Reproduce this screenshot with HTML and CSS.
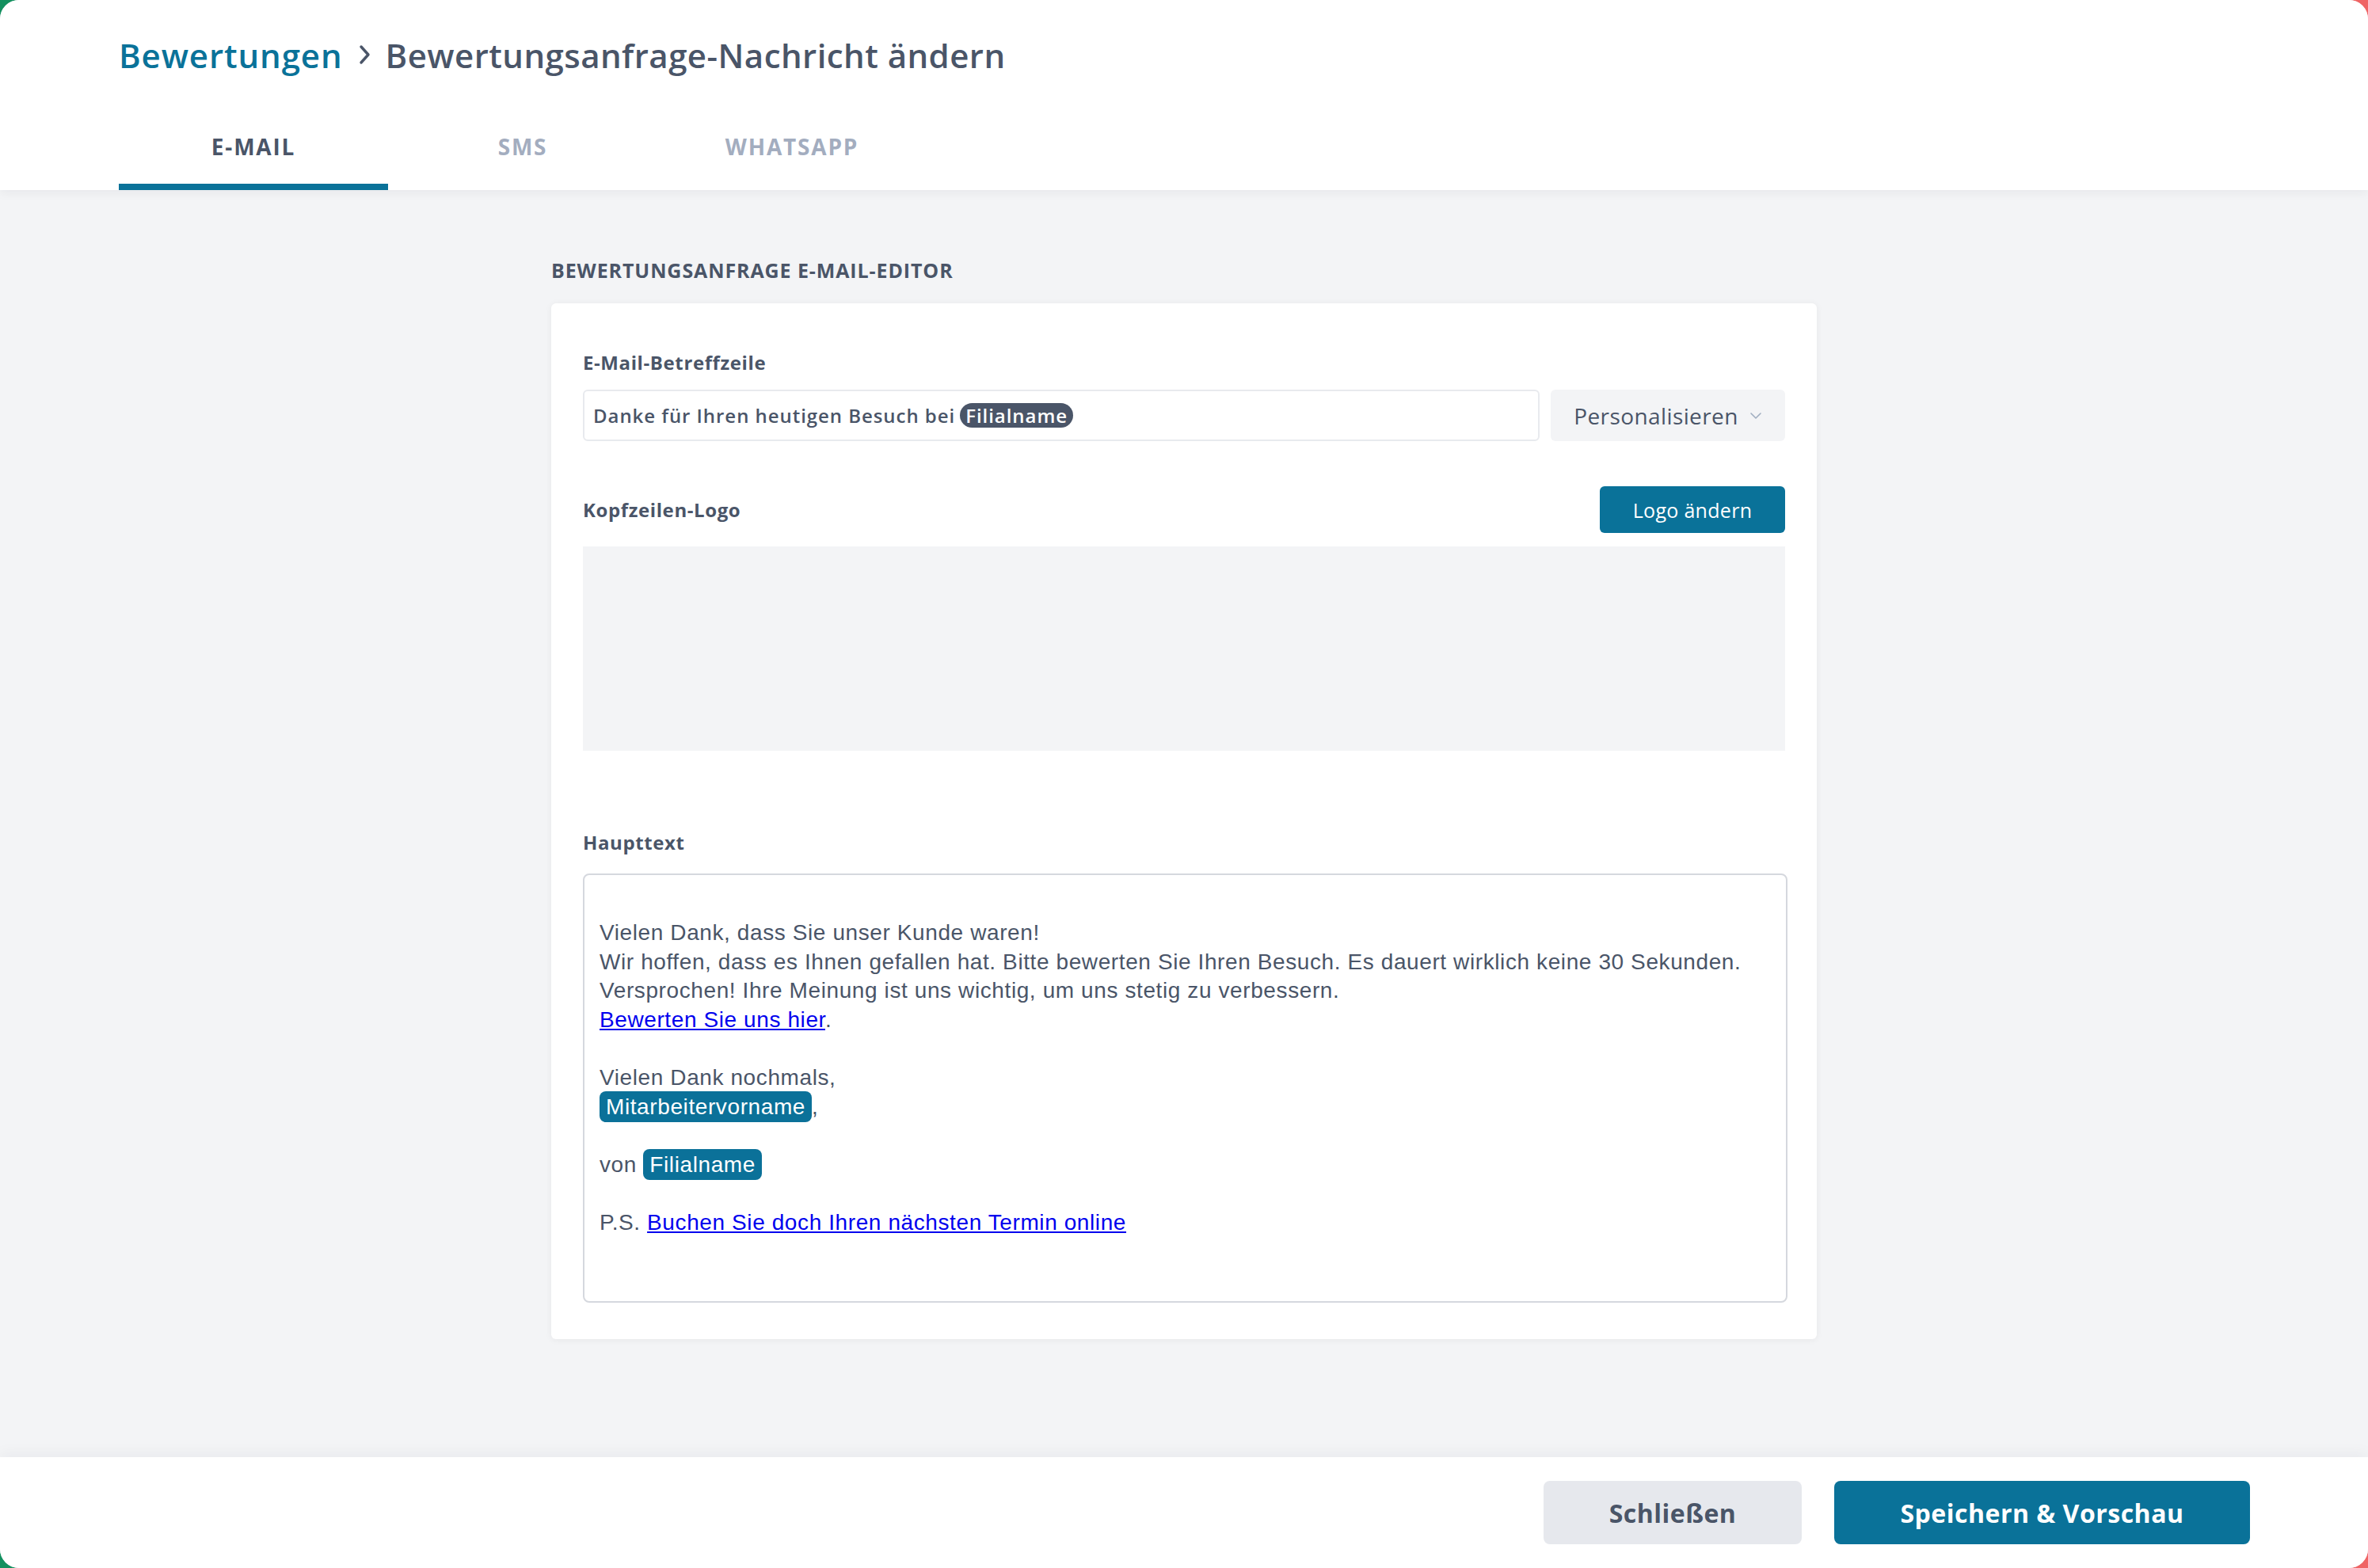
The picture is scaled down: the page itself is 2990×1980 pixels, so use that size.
FILE: index.html
```html
<!DOCTYPE html>
<html lang="de">
<head>
    <meta charset="UTF-8">
    <meta name="viewport" content="width=device-width, initial-scale=1.0">
    <title>Bewertungsanfrage-Nachricht ändern</title>
    <link rel="stylesheet" href="styles.css">
</head>
<body>
    <div class="window">
        <header class="page-header">
            <nav class="crumbs">
                <a href="#" class="crumb-link">Bewertungen</a>
                <svg class="crumb-sep" width="16" height="26" viewBox="0 0 16 26">
                    <path d="M3 3 L12 13 L3 23" fill="none" stroke="#4a5568" stroke-width="3.4" stroke-linecap="round" stroke-linejoin="round"/>
                </svg>
                <span>Bewertungsanfrage-Nachricht ändern</span>
            </nav>
            <div class="tabs">
                <button class="tab active">E-MAIL</button>
                <button class="tab">SMS</button>
                <button class="tab">WHATSAPP</button>
            </div>
        </header>

        <main class="content">
            <section class="editor">
                <h2 class="section-title">BEWERTUNGSANFRAGE E-MAIL-EDITOR</h2>
                <div class="card">
                    <!-- Betreffzeile -->
                    <p class="field-label subject-label">E-Mail-Betreffzeile</p>
                    <div class="subject-row">
                        <div class="subject-input"><span>Danke für Ihren heutigen Besuch bei</span><span class="tag">Filialname</span></div>
                        <button class="personalize">
                            Personalisieren
                            <svg width="16" height="10" viewBox="0 0 16 10">
                                <path d="M2 2 L8 8 L14 2" fill="none" stroke="#a0aec0" stroke-width="1.6" stroke-linecap="round" stroke-linejoin="round"/>
                            </svg>
                        </button>
                    </div>

                    <!-- Logo -->
                    <div class="logo-head">
                        <p class="field-label">Kopfzeilen-Logo</p>
                        <button class="btn-logo">Logo ändern</button>
                    </div>
                    <div class="logo-preview"></div>

                    <!-- Haupttext -->
                    <p class="field-label body-label">Haupttext</p>
                    <div class="body-editor" contenteditable="true">
                        <p>Vielen Dank, dass Sie unser Kunde waren!</p>
                        <p>Wir hoffen, dass es Ihnen gefallen hat. Bitte bewerten Sie Ihren Besuch. Es dauert wirklich keine 30 Sekunden.</p>
                        <p>Versprochen! Ihre Meinung ist uns wichtig, um uns stetig zu verbessern.</p>
                        <p><a href="#">Bewerten Sie uns hier</a>.</p>
                        <p><br></p>
                        <p>Vielen Dank nochmals,</p>
                        <p><span class="var-chip">Mitarbeitervorname</span>,</p>
                        <p><br></p>
                        <p>von <span class="var-chip">Filialname</span></p>
                        <p><br></p>
                        <p>P.S. <a href="#">Buchen Sie doch Ihren nächsten Termin online</a></p>
                    </div>
                </div>
            </section>
        </main>

        <footer class="page-footer">
            <button class="btn btn-light">Schließen</button>
            <button class="btn btn-dark">Speichern &amp; Vorschau</button>
        </footer>
    </div>
</body>
</html>
```

FILE: styles.css
```css
html, body {
    margin: 0;
    padding: 0;
    height: 100%;
}
body {
    font-family: "Open Sans", "Noto Sans", Arial, sans-serif;
    background: linear-gradient(90deg, #13905f 0%, #13905f 45%, #ef6464 55%, #ef6464 100%);
}
.window {
    height: 1980px;
    border-radius: 24px;
    overflow: hidden;
    background-color: #f3f4f6;
    display: flex;
    flex-direction: column;
}

/* Kopfbereich mit Breadcrumb und Tabs */
.page-header {
    background-color: #ffffff;
    padding: 44px 150px 0;
    box-shadow: 0 4px 12px rgba(17, 24, 39, 0.05);
    position: relative;
    z-index: 1;
}
.crumbs {
    display: flex;
    align-items: center;
    height: 50px;
    font-size: 42px;
    font-weight: 600;
    letter-spacing: 0.45px;
    color: #4a5568;
}
.crumb-link {
    color: #0a7299;
    text-decoration: none;
    letter-spacing: 0.9px;
}
.crumb-sep {
    margin: 0 18px 0 20px;
}
.tabs {
    display: flex;
    margin-top: 36px;
}
.tab {
    width: 340px;
    height: 110px;
    padding: 8px 0 0;
    border: 0;
    border-bottom: 8px solid transparent;
    background: none;
    font-family: inherit;
    font-size: 28px;
    font-weight: 700;
    letter-spacing: 1.8px;
    color: #a3adbf;
    cursor: pointer;
}
.tab.active {
    color: #4a5568;
    border-bottom-color: #0a7299;
}

/* Inhalt */
.content {
    flex: 1;
    padding-top: 86px;
}
.editor {
    width: 1598px;
    margin: 0 auto;
}
.section-title {
    margin: 0 0 27px;
    font-size: 25px;
    line-height: 30px;
    font-weight: 700;
    letter-spacing: 0.9px;
    color: #4a5568;
}
.card {
    background-color: #ffffff;
    border-radius: 6px;
    box-shadow: 0 1px 8px rgba(0, 0, 0, 0.06);
    padding: 60px 40px 46px;
}
.field-label {
    margin: 0;
    font-size: 24px;
    line-height: 30px;
    font-weight: 700;
    letter-spacing: 0.6px;
    color: #4a5568;
}
.subject-label {
    margin-bottom: 19px;
}
.subject-row {
    display: flex;
    gap: 14px;
    height: 65px;
}
.subject-input {
    flex: 1;
    display: flex;
    align-items: center;
    gap: 6px;
    padding: 0 11px;
    border: 2px solid #e8eaee;
    border-radius: 6px;
    font-size: 24px;
    font-weight: 600;
    letter-spacing: 0.95px;
    color: #4a5568;
}
.tag {
    display: inline-block;
    height: 31px;
    line-height: 31px;
    padding: 0 7px;
    border-radius: 16px;
    background-color: #4a5568;
    color: #ffffff;
}
.personalize {
    width: 296px;
    display: flex;
    align-items: center;
    justify-content: center;
    gap: 14px;
    border: 0;
    border-radius: 6px;
    background-color: #f3f4f6;
    font-family: inherit;
    font-size: 28px;
    letter-spacing: 0.4px;
    color: #4a5568;
}
.logo-head {
    display: flex;
    justify-content: space-between;
    align-items: center;
    margin-top: 57px;
}
.btn-logo {
    width: 234px;
    height: 59px;
    border: 0;
    border-radius: 6px;
    background-color: #0a7299;
    font-family: inherit;
    font-size: 25px;
    letter-spacing: 0.3px;
    color: #ffffff;
}
.logo-preview {
    margin-top: 17px;
    height: 258px;
    background-color: #f3f4f6;
}
.body-label {
    margin-top: 101px;
    margin-bottom: 24px;
}
.body-editor {
    height: 542px;
    margin-right: -3px;
    box-sizing: border-box;
    padding: 55px 19px 0;
    border: 2px solid #d5d8de;
    border-radius: 8px;
    font-family: "Liberation Sans", Arial, sans-serif;
    font-size: 28px;
    line-height: 36.6px;
    letter-spacing: 0.6px;
    color: #4a5568;
    outline: none;
}
.body-editor p {
    margin: 0;
}
.body-editor a {
    color: #0000ee;
}
.var-chip {
    padding: 4px 8px;
    border-radius: 8px;
    background-color: #0b7199;
    color: #ffffff;
}

/* Fußleiste */
.page-footer {
    height: 140px;
    box-sizing: border-box;
    padding: 30px 149px 0;
    display: flex;
    justify-content: flex-end;
    align-items: flex-start;
    gap: 41px;
    background-color: #ffffff;
    box-shadow: 0 -6px 16px rgba(17, 24, 39, 0.04);
}
.btn {
    height: 80px;
    border: 0;
    border-radius: 8px;
    font-family: inherit;
    font-size: 32px;
    font-weight: 700;
    letter-spacing: 0.5px;
    cursor: pointer;
}
.btn-light {
    width: 326px;
    background-color: #e6e8ed;
    color: #4a5568;
}
.btn-dark {
    width: 525px;
    background-color: #0a7299;
    color: #ffffff;
}
```
